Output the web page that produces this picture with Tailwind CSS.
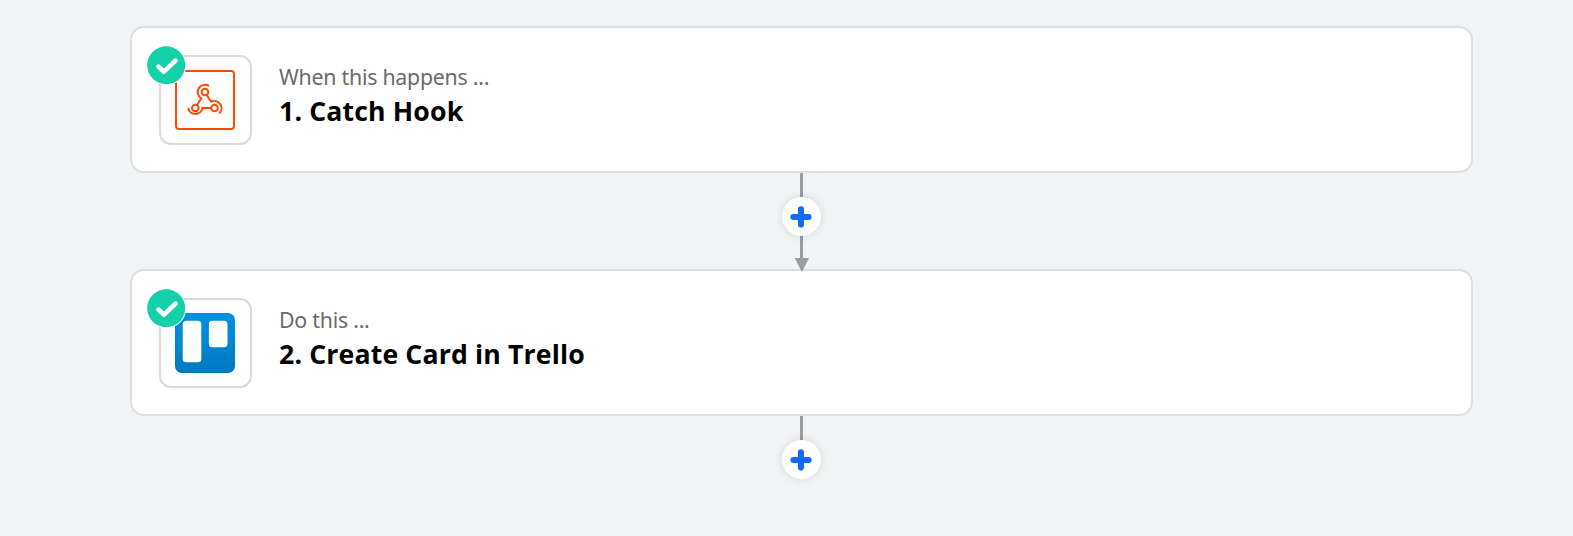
<!DOCTYPE html>
<html lang="en">
<head>
    <meta charset="UTF-8">
    <meta name="viewport" content="width=device-width, initial-scale=1.0">
    <title>Zap Editor</title>
    <script src="https://cdn.jsdelivr.net/npm/@tailwindcss/browser@4"></script>
</head>
<body class="bg-[#f0f4f5] font-['Open_Sans',sans-serif]">
    <div class="h-[536px] overflow-hidden pt-[26px] pl-[130px]">
        <div class="w-[1343px] flex flex-col">

            <!-- Step 1 -->
            <div class="h-[147px] flex items-start bg-white border-2 border-[#d9dfe2] rounded-[14px] pt-[27px] pl-[27px]">
                <div class="relative w-[93px] h-[90px] shrink-0 border-2 border-[#dadadb] rounded-[12px] pt-[13px] pl-[14px]">
                    <svg class="w-[60px] h-[60px]" viewBox="0 0 60 60" fill="none" stroke="#ff4a00" stroke-width="2">
                        <rect x="1" y="1" width="58" height="58" rx="3"/>
                        <circle cx="30" cy="22" r="3.3"/>
                        <circle cx="20.3" cy="38" r="3.3"/>
                        <circle cx="39.5" cy="38" r="3.3"/>
                        <path d="M34 15.8A7.3 7.3 0 0 0 26.2 28.3L22.1 35"/>
                        <path d="M13.2 38A7.2 7.2 0 0 0 27.4 38H36"/>
                        <path d="M44.2 43.6A7.3 7.3 0 0 0 36 31.7L31.8 24.9"/>
                    </svg>
                    <svg class="absolute -left-[15px] -top-[12px] w-[41px] h-[41px]" viewBox="0 0 41 41">
                        <circle cx="20.2" cy="20.3" r="20" fill="#fff"/>
                        <circle cx="20.2" cy="20.3" r="19" fill="#15d1a9"/>
                        <path d="M12.5 21.6L18 26.7L29.5 15.6" fill="none" stroke="#fff" stroke-width="4.6" stroke-linecap="round" stroke-linejoin="round"/>
                    </svg>
                </div>
                <div class="pl-[27px] pt-[7px]">
                    <p class="text-[21.33px] leading-[30px] tracking-[-0.25px] text-[#6b6b6b] font-['Noto_Sans',sans-serif]">When this happens ...</p>
                    <h2 class="text-[26.67px] leading-[38px] tracking-[0.14px] font-bold text-black">1. Catch Hook</h2>
                </div>
            </div>

            <!-- Connector -->
            <div class="relative h-24">
                <svg class="absolute left-[651px] top-0 w-10 h-[100px]" viewBox="0 0 40 100">
                    <path d="M19 0h3v86h-3z" fill="#969da0"/>
                    <path d="M13.7 85h14.3l-7.1 14z" fill="#969da0"/>
                </svg>
                <button class="absolute left-[651.5px] top-[23.5px] w-[39.5px] h-[39.5px] rounded-full bg-white shadow-[0_0_9px_rgba(0,0,0,0.12)] flex">
                    <svg class="w-10 h-10" viewBox="0 0 40 40" stroke="#136bf5" stroke-width="6.2" stroke-linecap="round">
                        <path d="M11.5 20h15.4M19.2 12.3v15.4"/>
                    </svg>
                </button>
            </div>

            <!-- Step 2 -->
            <div class="h-[147px] flex items-start bg-white border-2 border-[#d9dfe2] rounded-[14px] pt-[27px] pl-[27px]">
                <div class="relative w-[93px] h-[90px] shrink-0 border-2 border-[#dadadb] rounded-[12px] pt-[13px] pl-[14px]">
                    <svg class="w-[60px] h-[60px]" viewBox="0 0 60 60">
                        <defs>
                            <linearGradient id="trello" x1="0" y1="0" x2="0" y2="1">
                                <stop offset="0" stop-color="#0091e6"/>
                                <stop offset="1" stop-color="#0079bf"/>
                            </linearGradient>
                        </defs>
                        <rect width="60" height="60" rx="7" fill="url(#trello)"/>
                        <rect x="7.7" y="7.7" width="18.6" height="41.6" rx="3.5" fill="#fff"/>
                        <rect x="33.9" y="7.7" width="18.6" height="26.6" rx="3.5" fill="#fff"/>
                    </svg>
                    <svg class="absolute -left-[15px] -top-[12px] w-[41px] h-[41px]" viewBox="0 0 41 41">
                        <circle cx="20.2" cy="20.3" r="20" fill="#fff"/>
                        <circle cx="20.2" cy="20.3" r="19" fill="#15d1a9"/>
                        <path d="M12.5 21.6L18 26.7L29.5 15.6" fill="none" stroke="#fff" stroke-width="4.6" stroke-linecap="round" stroke-linejoin="round"/>
                    </svg>
                </div>
                <div class="pl-[27px] pt-[7px]">
                    <p class="text-[21.33px] leading-[30px] tracking-[-0.25px] text-[#6b6b6b] font-['Noto_Sans',sans-serif]">Do this ...</p>
                    <h2 class="text-[26.67px] leading-[38px] tracking-[0.14px] font-bold text-black">2. Create Card in Trello</h2>
                </div>
            </div>

            <!-- Add step -->
            <div class="relative h-24">
                <div class="absolute left-[670px] top-0 w-[3px] h-8 bg-[#969da0]"></div>
                <button class="absolute left-[651.5px] top-[23.5px] w-[39.5px] h-[39.5px] rounded-full bg-white shadow-[0_0_9px_rgba(0,0,0,0.12)] flex">
                    <svg class="w-10 h-10" viewBox="0 0 40 40" stroke="#136bf5" stroke-width="6.2" stroke-linecap="round">
                        <path d="M11.5 20h15.4M19.2 12.3v15.4"/>
                    </svg>
                </button>
            </div>

        </div>
    </div>
</body>
</html>
